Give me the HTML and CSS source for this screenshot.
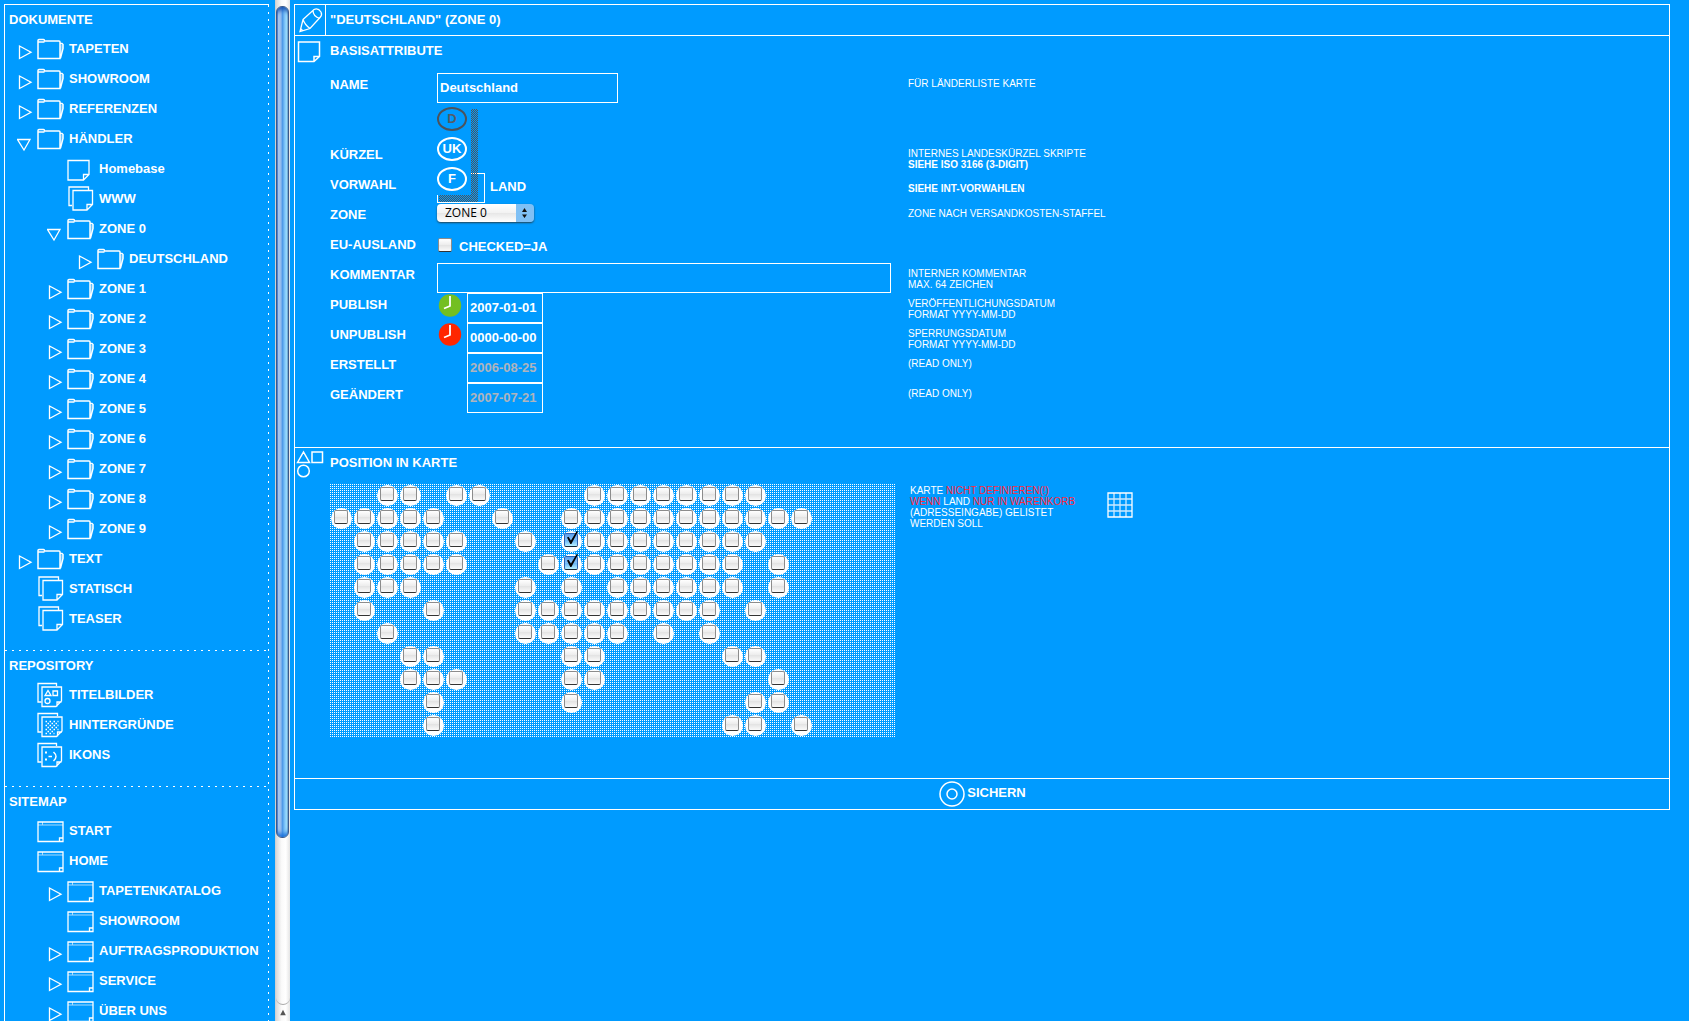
FILE: index.html
```html
<!DOCTYPE html>
<html lang="de">
<head>
    <meta charset="UTF-8">
    <meta name="viewport" content="width=device-width, initial-scale=1.0">
    <title>Deutschland (Zone 0)</title>
    <link rel="stylesheet" href="styles.css">
</head>
<body>

    <!-- Icon sprites -->
    <svg class="sprites" aria-hidden="true">
        <symbol id="right" viewBox="0 0 17 30"><path d="M2.500 12v12.500L14 18.200z"/></symbol>
        <symbol id="down" viewBox="0 0 17 30"><path d="M.5 15.500h12.500L7 26z"/></symbol>
        <symbol id="folder" viewBox="0 0 27 30">
            <path d="M23 12l2.500-2 .5 3.500L23.500 24z" fill="#66c2ff" stroke="none"/>
            <path d="M1 24.500V6.500q0-1 1-1h4.500q1 0 1 1.500H22q1 0 1 1V24.500zM1.500 8h6M23.500 9.500h1.500l1 1v4L23.500 24" stroke-width="1.500"/>
        </symbol>
        <symbol id="page" viewBox="0 0 27 30"><path d="M1 6.500h21v14l-5.500 5.500H1zM22 20.500h-5.500V26"/></symbol>
        <symbol id="pages" viewBox="0 0 27 30">
            <path d="M21.500 6V3H2v18.500h3"/>
            <path d="M6 6.500h19.500v14L20 26H6zM25.500 20.500H20V26"/>
        </symbol>
        <symbol id="shapes-pages" viewBox="0 0 27 30">
            <path d="M19.500 6V3.500H1v18.500h3.500"/>
            <path d="M5 7h19.500v14L19 26.500H5zM24.500 22H20v4.500"/>
            <path d="M8 15.500l3-5 3 5zM16 11h4.500v4.500H16z"/><circle cx="10.500" cy="21" r="2.500"/>
        </symbol>
        <symbol id="dots-pages" viewBox="0 0 27 30">
            <path d="M20.500 6V3.500H1v18.500h3.500"/>
            <path d="M5 7h20v14L19.500 26.500H5zM25 22h-4.500v4.500"/>
            <path d="M8.500 11.500h13M8.500 15.500h13M8.500 19.500h13M8.500 23.500h9" stroke-dasharray="1.500 2.500"/>
            <path d="M10.500 13.500h10M10.500 17.500h10M10.500 21.500h8" stroke-dasharray="1.500 2.500"/>
        </symbol>
        <symbol id="smile-pages" viewBox="0 0 27 30">
            <path d="M19.500 6V3.500H1v18.500h3.500"/>
            <path d="M5 7h19.500v14L19 26.500H5zM24.500 22H20v4.500"/>
            <path d="M8 12.500h2M8 19.500h2" stroke-width="2"/><path d="M11.500 16.500h3.500M16.500 12q5 4.500 0 9" stroke-width="1.500"/>
        </symbol>
        <symbol id="window" viewBox="0 0 27 30">
            <path d="M1 9h25M5.500 6v3" stroke="#a6dbff" stroke-width="1"/>
            <path d="M1 6h25v19.500H1zM26 22h-3.500v3.500"/>
        </symbol>
    </svg>

    <nav class="sidebar">
        <section class="group">
            <h2>DOKUMENTE</h2>
            <ul>
                <li><button class="toggle" aria-label="Öffnen"><svg><use href="#right"/></svg></button><a href="#"><svg><use href="#folder"/></svg>TAPETEN</a></li>
                <li><button class="toggle" aria-label="Öffnen"><svg><use href="#right"/></svg></button><a href="#"><svg><use href="#folder"/></svg>SHOWROOM</a></li>
                <li><button class="toggle" aria-label="Öffnen"><svg><use href="#right"/></svg></button><a href="#"><svg><use href="#folder"/></svg>REFERENZEN</a></li>
                <li><button class="toggle" aria-label="Schließen"><svg><use href="#down"/></svg></button><a href="#"><svg><use href="#folder"/></svg>HÄNDLER</a></li>
                <li class="level2"><a href="#"><svg><use href="#page"/></svg>Homebase</a></li>
                <li class="level2"><a href="#"><svg><use href="#pages"/></svg>WWW</a></li>
                <li class="level2"><button class="toggle" aria-label="Schließen"><svg><use href="#down"/></svg></button><a href="#"><svg><use href="#folder"/></svg>ZONE 0</a></li>
                <li class="level3"><button class="toggle" aria-label="Öffnen"><svg><use href="#right"/></svg></button><a href="#"><svg><use href="#folder"/></svg>DEUTSCHLAND</a></li>
                <li class="level2"><button class="toggle" aria-label="Öffnen"><svg><use href="#right"/></svg></button><a href="#"><svg><use href="#folder"/></svg>ZONE 1</a></li>
                <li class="level2"><button class="toggle" aria-label="Öffnen"><svg><use href="#right"/></svg></button><a href="#"><svg><use href="#folder"/></svg>ZONE 2</a></li>
                <li class="level2"><button class="toggle" aria-label="Öffnen"><svg><use href="#right"/></svg></button><a href="#"><svg><use href="#folder"/></svg>ZONE 3</a></li>
                <li class="level2"><button class="toggle" aria-label="Öffnen"><svg><use href="#right"/></svg></button><a href="#"><svg><use href="#folder"/></svg>ZONE 4</a></li>
                <li class="level2"><button class="toggle" aria-label="Öffnen"><svg><use href="#right"/></svg></button><a href="#"><svg><use href="#folder"/></svg>ZONE 5</a></li>
                <li class="level2"><button class="toggle" aria-label="Öffnen"><svg><use href="#right"/></svg></button><a href="#"><svg><use href="#folder"/></svg>ZONE 6</a></li>
                <li class="level2"><button class="toggle" aria-label="Öffnen"><svg><use href="#right"/></svg></button><a href="#"><svg><use href="#folder"/></svg>ZONE 7</a></li>
                <li class="level2"><button class="toggle" aria-label="Öffnen"><svg><use href="#right"/></svg></button><a href="#"><svg><use href="#folder"/></svg>ZONE 8</a></li>
                <li class="level2"><button class="toggle" aria-label="Öffnen"><svg><use href="#right"/></svg></button><a href="#"><svg><use href="#folder"/></svg>ZONE 9</a></li>
                <li><button class="toggle" aria-label="Öffnen"><svg><use href="#right"/></svg></button><a href="#"><svg><use href="#folder"/></svg>TEXT</a></li>
                <li><a href="#"><svg><use href="#pages"/></svg>STATISCH</a></li>
                <li><a href="#"><svg><use href="#pages"/></svg>TEASER</a></li>
            </ul>
        </section>
        <section class="group">
            <h2>REPOSITORY</h2>
            <ul>
                <li><a href="#"><svg><use href="#shapes-pages"/></svg>TITELBILDER</a></li>
                <li><a href="#"><svg><use href="#dots-pages"/></svg>HINTERGRÜNDE</a></li>
                <li><a href="#"><svg><use href="#smile-pages"/></svg>IKONS</a></li>
            </ul>
        </section>
        <section class="group">
            <h2>SITEMAP</h2>
            <ul>
                <li><a href="#"><svg><use href="#window"/></svg>START</a></li>
                <li><a href="#"><svg><use href="#window"/></svg>HOME</a></li>
                <li class="level2"><button class="toggle" aria-label="Öffnen"><svg><use href="#right"/></svg></button><a href="#"><svg><use href="#window"/></svg>TAPETENKATALOG</a></li>
                <li class="level2"><a href="#"><svg><use href="#window"/></svg>SHOWROOM</a></li>
                <li class="level2"><button class="toggle" aria-label="Öffnen"><svg><use href="#right"/></svg></button><a href="#"><svg><use href="#window"/></svg>AUFTRAGSPRODUKTION</a></li>
                <li class="level2"><button class="toggle" aria-label="Öffnen"><svg><use href="#right"/></svg></button><a href="#"><svg><use href="#window"/></svg>SERVICE</a></li>
                <li class="level2"><button class="toggle" aria-label="Öffnen"><svg><use href="#right"/></svg></button><a href="#"><svg><use href="#window"/></svg>ÜBER UNS</a></li>
            </ul>
        </section>
    </nav>

    <!-- Scrollbar -->
    <div class="scrollbar">
        <div class="track"><div class="thumb"></div></div>
        <button class="scroll-up" aria-label="Nach oben"><svg viewBox="0 0 15 17"><path d="M4.500 11h6L7.500 5z" fill="#555"/></svg></button>
    </div>

    <form class="editor">
        <header class="title">
            <svg class="pencil" viewBox="0 0 30 30">
                <path d="M8 14.500L19 4.500q4-2 7 2.500 1.500 3-1 5.500L15 23.500 5 26.500zM8 14.500q2 5.500 7 9M18 5.500q0 6 7 8M5.500 23.500l2 2"/>
            </svg>
            <h1>"DEUTSCHLAND" (ZONE 0)</h1>
        </header>

        <section class="panel basis">
            <svg class="panel-icon" viewBox="0 0 35 30"><path d="M3.500 6h21v14.500L19 25.500H3.500zM24.500 20.500H19v5"/></svg>
            <div class="panel-body">
                <h2>BASISATTRIBUTE</h2>
                <div class="row">
                    <label for="name">NAME</label>
                    <div class="field"><input class="text name" id="name" type="text" value="Deutschland"></div>
                    <p class="hint">FÜR LÄNDERLISTE KARTE</p>
                </div>
                <div class="row tall">
                    <span class="label" id="kuerzel">KÜRZEL</span>
                    <div class="field">
                        <div class="lang-menu" role="group" aria-labelledby="kuerzel">
                            <button class="lang active" type="button">D</button>
                            <button class="lang" type="button">UK</button>
                            <button class="lang" type="button">F</button>
                        </div>
                    </div>
                    <p class="hint">INTERNES LANDESKÜRZEL SKRIPTE<br><b>SIEHE ISO 3166 (3-DIGIT)</b></p>
                </div>
                <div class="row">
                    <label for="vorwahl">VORWAHL</label>
                    <div class="field"><input class="text vorwahl" id="vorwahl" type="text"><span class="land">LAND</span></div>
                    <p class="hint middle"><b>SIEHE INT-VORWAHLEN</b></p>
                </div>
                <div class="row">
                    <label for="zone">ZONE</label>
                    <div class="field">
                        <div class="select">
                            <select id="zone"><option>ZONE 0</option></select>
                            <svg viewBox="0 0 17 18"><path d="M8.500 4L6 8h5zM8.500 14L6 10.500h5z" fill="#111"/></svg>
                        </div>
                    </div>
                    <p class="hint">ZONE NACH VERSANDKOSTEN-STAFFEL</p>
                </div>
                <div class="row">
                    <span class="label">EU-AUSLAND</span>
                    <div class="field"><input class="check" id="eu" type="checkbox"><label class="check-label" for="eu">CHECKED=JA</label></div>
                </div>
                <div class="row">
                    <label for="kommentar">KOMMENTAR</label>
                    <div class="field"><input class="text kommentar" id="kommentar" type="text"></div>
                    <p class="hint">INTERNER KOMMENTAR<br>MAX. 64 ZEICHEN</p>
                </div>
                <div class="row">
                    <label for="publish">PUBLISH</label>
                    <div class="field">
                        <svg class="clock" viewBox="0 0 30 30"><circle cx="13" cy="12.500" r="11.200" fill="#73bf21" stroke="none"/><path d="M13 3v10l-6 2.500" stroke-width="1.800"/></svg>
                        <input class="text date" id="publish" type="text" value="2007-01-01">
                    </div>
                    <p class="hint">VERÖFFENTLICHUNGSDATUM<br>FORMAT YYYY-MM-DD</p>
                </div>
                <div class="row">
                    <label for="unpublish">UNPUBLISH</label>
                    <div class="field">
                        <svg class="clock" viewBox="0 0 30 30"><circle cx="13" cy="11.500" r="11.200" fill="#ff2600" stroke="none"/><path d="M13 2v10l-6 2.500" stroke-width="1.800"/></svg>
                        <input class="text date" id="unpublish" type="text" value="0000-00-00">
                    </div>
                    <p class="hint">SPERRUNGSDATUM<br>FORMAT YYYY-MM-DD</p>
                </div>
                <div class="row">
                    <label for="erstellt">ERSTELLT</label>
                    <div class="field noclock"><input class="text date" id="erstellt" type="text" value="2006-08-25" readonly></div>
                    <p class="hint">(READ ONLY)</p>
                </div>
                <div class="row">
                    <label for="geaendert">GEÄNDERT</label>
                    <div class="field noclock"><input class="text date" id="geaendert" type="text" value="2007-07-21" readonly></div>
                    <p class="hint">(READ ONLY)</p>
                </div>
            </div>
        </section>

        <section class="panel karte">
            <svg class="panel-icon" viewBox="0 0 35 30"><path d="M2.500 14.500L8.500 4l6 10.500zM17 4h10.500v10.500H17z"/><circle cx="8.500" cy="23" r="5.800"/></svg>
            <div class="panel-body">
                <h2>POSITION IN KARTE</h2>
                <div class="map-row">
                    <div class="map" id="map"></div>
                    <p class="hint">KARTE <em>NICHT DEFINIEREN(!)</em><br><em>WENN</em> LAND <em>NUR IN WARENKORB</em><br>(ADRESSEINGABE) GELISTET<br>WERDEN SOLL</p>
                    <svg class="grid-icon" viewBox="0 0 26 26"><path d="M7 1v24M13 1v24M19 1v24M1 7h24M1 13h24M1 19h24" stroke="#cceaff"/><path d="M1 1h24v24H1z"/></svg>
                </div>
            </div>
        </section>

        <footer class="save">
            <button class="save-button" type="button">
                <svg viewBox="0 0 28 30"><circle cx="14" cy="15" r="12"/><circle cx="14" cy="15" r="5"/></svg>SICHERN
            </button>
        </footer>
    </form>

    <script>
        // o = free position, x = selected position
        const rows = [
            '..oo.oo....oooooooo',
            'ooooo..o..ooooooooooo',
            '.ooooo..o.xoooooooo',
            '.ooooo...oxooooooo.o',
            '.ooo....o.o.oooooo.o',
            '.o..o...ooooooooo.o',
            '..o.....ooooo.o.o',
            '...oo.....oo.....oo',
            '...ooo....oo.......o',
            '....o.....o.......oo',
            '....o............oo.o'
        ];
        const map = document.getElementById('map');

        rows.forEach((row, y) => {
            row.split('').forEach((cell, x) => {
                if (cell === '.') return;
                const spot = document.createElement('label');
                const box = document.createElement('input');
                spot.className = 'spot';
                spot.style.gridArea = `${y + 1} / ${x + 1}`;
                box.type = 'checkbox';
                box.className = 'check';
                box.checked = cell === 'x';
                box.setAttribute('aria-label', `Position ${x + 1}/${y + 1}`);
                spot.appendChild(box);
                map.appendChild(spot);
            });
        });
    </script>

</body>
</html>
```
FILE: styles.css
```css
* {
    box-sizing: border-box;
}

body {
    display: flex;
    height: 100vh;
    margin: 0;
    overflow: hidden;
    background-color: #009bff;
    color: #fff;
    font: bold 13px/15px "Liberation Sans", Arial, sans-serif;
}

h1, h2, p, ul {
    margin: 0;
    padding: 0;
    font-size: 13px;
}

svg {
    display: block;
    flex: none;
    fill: none;
    stroke: #fff;
    stroke-width: 1.3;
}

button {
    margin: 0;
    padding: 0;
    border: 0;
    background: none;
    color: #fff;
    font: inherit;
    cursor: pointer;
}

.sprites {
    position: absolute;
    width: 0;
    height: 0;
}

/* Tree navigation */
.sidebar {
    flex: none;
    width: 265px;
    margin: 4px 6px 0 4px;
    border-top: 1px solid #fff;
    border-left: 1px solid #fff;
    background: repeating-linear-gradient(#fff 0 2px, transparent 2px 7px) right top / 1px 100% no-repeat;
    overflow: hidden;
}

.group {
    padding-bottom: 16px;
}

.group + .group {
    padding-top: 1px;
    background: repeating-linear-gradient(90deg, #fff 0 2px, transparent 2px 7px) left top / 100% 1px no-repeat;
}

.group h2 {
    padding-left: 4px;
    line-height: 29px;
}

.group li {
    display: flex;
    justify-content: flex-start;
    height: 30px;
    padding-left: 32px;
    list-style: none;
}

.group .level2 {
    padding-left: 62px;
}

.group .level3 {
    padding-left: 92px;
}

.group a {
    display: flex;
    gap: 5px;
    color: #fff;
    line-height: 29px;
    text-decoration: none;
    white-space: nowrap;
}

.group a svg {
    width: 27px;
    height: 30px;
}

.toggle, .toggle svg {
    width: 17px;
    height: 30px;
}

.toggle {
    flex: none;
    margin-right: 3px;
    margin-left: -20px;
}

/* Scrollbar between tree and form */
.scrollbar {
    display: flex;
    flex: none;
    flex-direction: column;
    width: 15px;
    border-left: 1px solid #d0d0d0;
    background: linear-gradient(90deg, #d8d8d8, #fafafa 40%, #fff 70%, #e4e4e4);
}

.track {
    display: flex;
    flex: 1;
    flex-direction: column;
    padding: 6px 0 0;
    border-bottom: 1px solid #aaa;
    border-radius: 0 0 8px 8px;
}

.track::after {
    content: "";
    flex: 1;
}

.thumb {
    flex: 5;
    width: 13px;
    border: 1px solid #3a5a8c;
    border-radius: 6px;
    background: linear-gradient(90deg, #2a63c4, #b4cff0 12%, #8fb9ee 35%, #4f9ae8 50%, #7cc4fa 70%, #a8e8ff 90%, #6f9cc0);
    box-shadow: inset 0 5px 4px -2px #1c56b4, inset 0 -6px 4px -3px #1a6fd8;
}

.scroll-up, .scroll-up svg {
    width: 14px;
    height: 16px;
    stroke: none;
}

/* Form */
.editor {
    flex: 1;
    align-self: flex-start;
    margin: 4px 19px 0 4px;
    border: 1px solid #fff;
}

.title {
    display: flex;
    gap: 4px;
    border-bottom: 1px solid #fff;
}

.title h1 {
    line-height: 29px;
}

.pencil {
    width: 31px;
    height: 30px;
    border-right: 1px solid #fff;
}

.panel {
    display: flex;
    border-bottom: 1px solid #fff;
}

.panel-icon {
    width: 35px;
    height: 30px;
    stroke-width: 1.5;
}

.panel-body {
    flex: 1;
}

.panel h2 {
    line-height: 29px;
}

.basis {
    padding-bottom: 34px;
}

.basis h2 {
    margin-bottom: 8px;
}

.row {
    display: grid;
    grid-template-columns: 107px 471px 1fr;
    height: 30px;
}

.tall {
    height: 70px;
    padding-top: 40px;
}

.row > label, .label {
    padding-top: 4px;
}

.field {
    display: flex;
    position: relative;
}

.text {
    height: 30px;
    padding: 0 2px 2px;
    border: 1px solid #fff;
    border-radius: 0;
    outline: none;
    background: none;
    color: #fff;
    font: inherit;
}

.text[readonly] {
    color: #b0b4bc;
}

.name {
    width: 181px;
}

.vorwahl {
    width: 48px;
}

.kommentar {
    width: 454px;
}

.date {
    width: 76px;
}

.clock {
    width: 30px;
    height: 30px;
}

.noclock {
    padding-left: 30px;
}

.land {
    padding: 6px 0 0 5px;
}

.hint {
    padding-top: 5px;
    font-size: 10px;
    font-weight: normal;
    line-height: 11px;
}

.hint em {
    color: #ff2a3c;
    font-style: normal;
}

.middle {
    align-self: center;
    padding-top: 0;
}

/* Language menu with dithered shadow, opened over the fields */
.lang-menu {
    position: absolute;
    z-index: 1;
    top: -40px;
    left: 0;
    display: flex;
    flex-direction: column;
    gap: 6px;
    width: 34px;
    padding: 4px 0;
    background-color: #009bff;
}

.lang-menu::before, .lang-menu::after {
    content: "";
    position: absolute;
    background: repeating-conic-gradient(#555 0 25%, transparent 0 50%) 0 0 / 2px 2px;
}

.lang-menu::before {
    top: 6px;
    bottom: 0;
    left: 100%;
    width: 7px;
}

.lang-menu::after {
    top: 100%;
    right: -7px;
    left: 2px;
    height: 7px;
}

.lang {
    width: 30px;
    height: 24px;
    border: 2px solid #fff;
    border-radius: 50%;
    line-height: 20px;
}

.active {
    border-color: #4c535c;
    color: #555c66;
}

.select {
    position: relative;
    width: 97px;
    height: 18px;
    margin-top: 1px;
}

.select select {
    appearance: none;
    width: 100%;
    height: 18px;
    padding: 0 8px;
    border: 0;
    border-radius: 4px;
    background: linear-gradient(90deg, transparent 79px, #7fc0f5 79px), linear-gradient(#fff, #f2f2f2 50%, #e6e6e6 50%, #fff);
    box-shadow: 0 1px 2px #245;
    color: #000;
    font: 12px/18px "Open Sans", sans-serif;
}

.select svg {
    position: absolute;
    top: 0;
    right: 1px;
    width: 17px;
    height: 18px;
    stroke: none;
    pointer-events: none;
}

.check {
    appearance: none;
    position: relative;
    flex: none;
    width: 14px;
    height: 14px;
    margin: 0;
    border: 1px solid #8c8c8c;
    border-bottom-color: #333;
    border-radius: 2px;
    background: linear-gradient(#fff, #ececec 50%, #e2e2e2 50%, #fafafa);
}

.field .check {
    margin: 5px 0 0 1px;
}

.check:checked {
    border-color: #2a5fb0;
    border-bottom-color: #123;
    background: linear-gradient(#5aa0ee, #86c2f8 50%, #66b2f4 50%, #b6f0ff);
}

.check:checked::before {
    content: "";
    position: absolute;
    top: -3px;
    left: 2px;
    width: 11px;
    height: 13px;
    background: #000;
    clip-path: polygon(0 50%, 14% 44%, 36% 74%, 88% 0, 100% 4%, 40% 100%, 30% 100%);
}

.check-label {
    padding: 6px 0 0 7px;
}

/* World map */
.karte {
    padding-bottom: 41px;
}

.karte h2 {
    margin-bottom: 7px;
}

.map-row {
    display: flex;
    align-items: flex-start;
}

.map {
    display: grid;
    grid-template-columns: repeat(24, 23px);
    grid-template-rows: repeat(11, 23px);
    flex: none;
    width: 565px;
    background: conic-gradient(#fff 25%, transparent 0) 1px 0 / 2px 2px;
}

.spot {
    display: flex;
    width: 21px;
    height: 21px;
    margin: 1px;
    padding: 2px 3px;
    border-radius: 50%;
    background-color: #fff;
}

.map-row .hint {
    width: 212px;
    padding: 1px 0 0 15px;
}

.grid-icon {
    width: 26px;
    height: 26px;
    margin-top: 8px;
}

.save {
    display: flex;
    justify-content: center;
}

.save-button {
    display: flex;
    gap: 1px;
    line-height: 28px;
}

.save-button svg {
    width: 28px;
    height: 30px;
    stroke-width: 1.5;
}
```
